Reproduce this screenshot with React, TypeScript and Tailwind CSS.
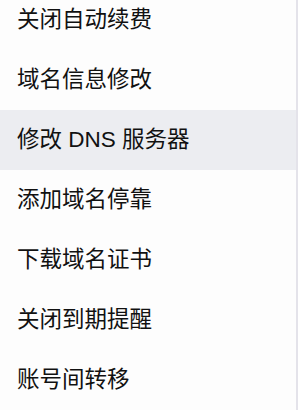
import React from "react";

const items = [
  "关闭自动续费",
  "域名信息修改",
  "修改 DNS 服务器",
  "添加域名停靠",
  "下载域名证书",
  "关闭到期提醒",
  "账号间转移",
];

export default function App() {
  return (
    <div
      className="w-[298px] h-[410px] overflow-hidden bg-[#fdfdfd] flex"
      style={{ fontFamily: '"Liberation Sans", "Noto Sans CJK SC", sans-serif' }}
    >
      <div className="flex-1 flex flex-col -mt-[10px]">
        {items.map((t, i) => (
          <div
            key={t}
            className={`h-[60px] shrink-0 flex items-center pl-[17px] text-[22.5px] text-[#111111] ${
              i === 2 ? "bg-[#ecedf1]" : ""
            }`}
          >
            {t}
          </div>
        ))}
      </div>
      <div className="w-[2px] h-full bg-[#e4e3ea]" />
    </div>
  );
}
